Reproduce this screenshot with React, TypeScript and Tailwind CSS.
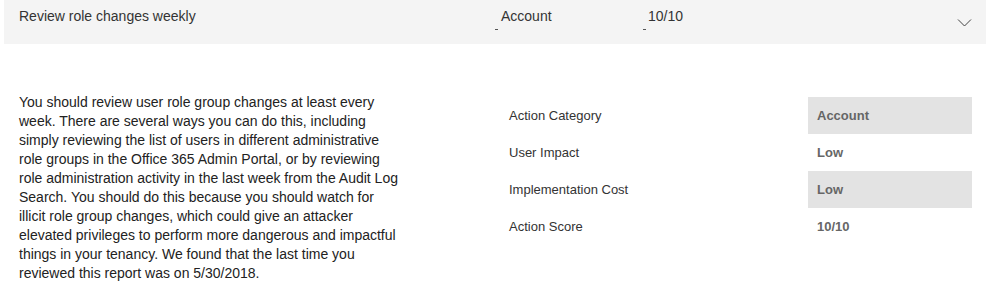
import React from "react";

const details = [
  { label: "Action Category", value: "Account", shaded: true },
  { label: "User Impact", value: "Low", shaded: false },
  { label: "Implementation Cost", value: "Low", shaded: true },
  { label: "Action Score", value: "10/10", shaded: false },
];

const Chevron = () => (
  <svg width="15" height="9" viewBox="0 0 15 9" fill="none">
    <path d="M1 1.5 L7.5 8 L14 1.5" stroke="#444" strokeWidth="1" />
  </svg>
);

const App = () => {
  return (
    <div
      className="w-[998px] h-[302px] bg-white text-[#333]"
      style={{ fontFamily: '"Liberation Sans", Arial, sans-serif' }}
    >
      <div className="ml-1 w-[982px]">
        {/* collapsed row header */}
        <div className="flex items-start h-[44px] bg-[#f4f4f4] pt-[7px] text-[14px] leading-[19px]">
          <div className="w-[491px] pl-[15px]">Review role changes weekly</div>
          <div className="w-[148px] flex flex-col">
            <span className="pl-[6px]">Account</span>
            <span className="mt-[3px] w-[3px] h-px bg-[#555]"></span>
          </div>
          <div className="flex-1 flex flex-col">
            <span className="pl-[5px]">10/10</span>
            <span className="mt-[3px] w-[3px] h-px bg-[#555]"></span>
          </div>
          <div className="pr-[14px] pt-[11px]">
            <Chevron />
          </div>
        </div>

        {/* expanded content */}
        <div className="flex items-start mt-[49px]">
          <p className="ml-[15px] w-[384px] text-[14px] leading-[19px] text-[#222]">
            You should review user role group changes at least every week. There are several ways you can do
            this, including simply reviewing the list of users in different administrative role groups in the
            Office 365 Admin Portal, or by reviewing role administration activity in the last week from the Audit
            Log Search. You should do this because you should watch for illicit role group changes, which could
            give an attacker elevated privileges to perform more dangerous and impactful things in your tenancy.
            We found that the last time you reviewed this report was on 5/30/2018.
          </p>
          <div className="ml-[106px] mt-[4px] grid grid-cols-[299px_164px] text-[13px]">
            {details.map((d) => (
              <React.Fragment key={d.label}>
                <div className="h-[37px] flex items-center text-[#333]">{d.label}</div>
                <div
                  className={`h-[37px] flex items-center pl-[9px] font-bold text-[#666] ${
                    d.shaded ? "bg-[#e3e3e3]" : ""
                  }`}
                >
                  {d.value}
                </div>
              </React.Fragment>
            ))}
          </div>
        </div>
      </div>
    </div>
  );
};

export default App;
